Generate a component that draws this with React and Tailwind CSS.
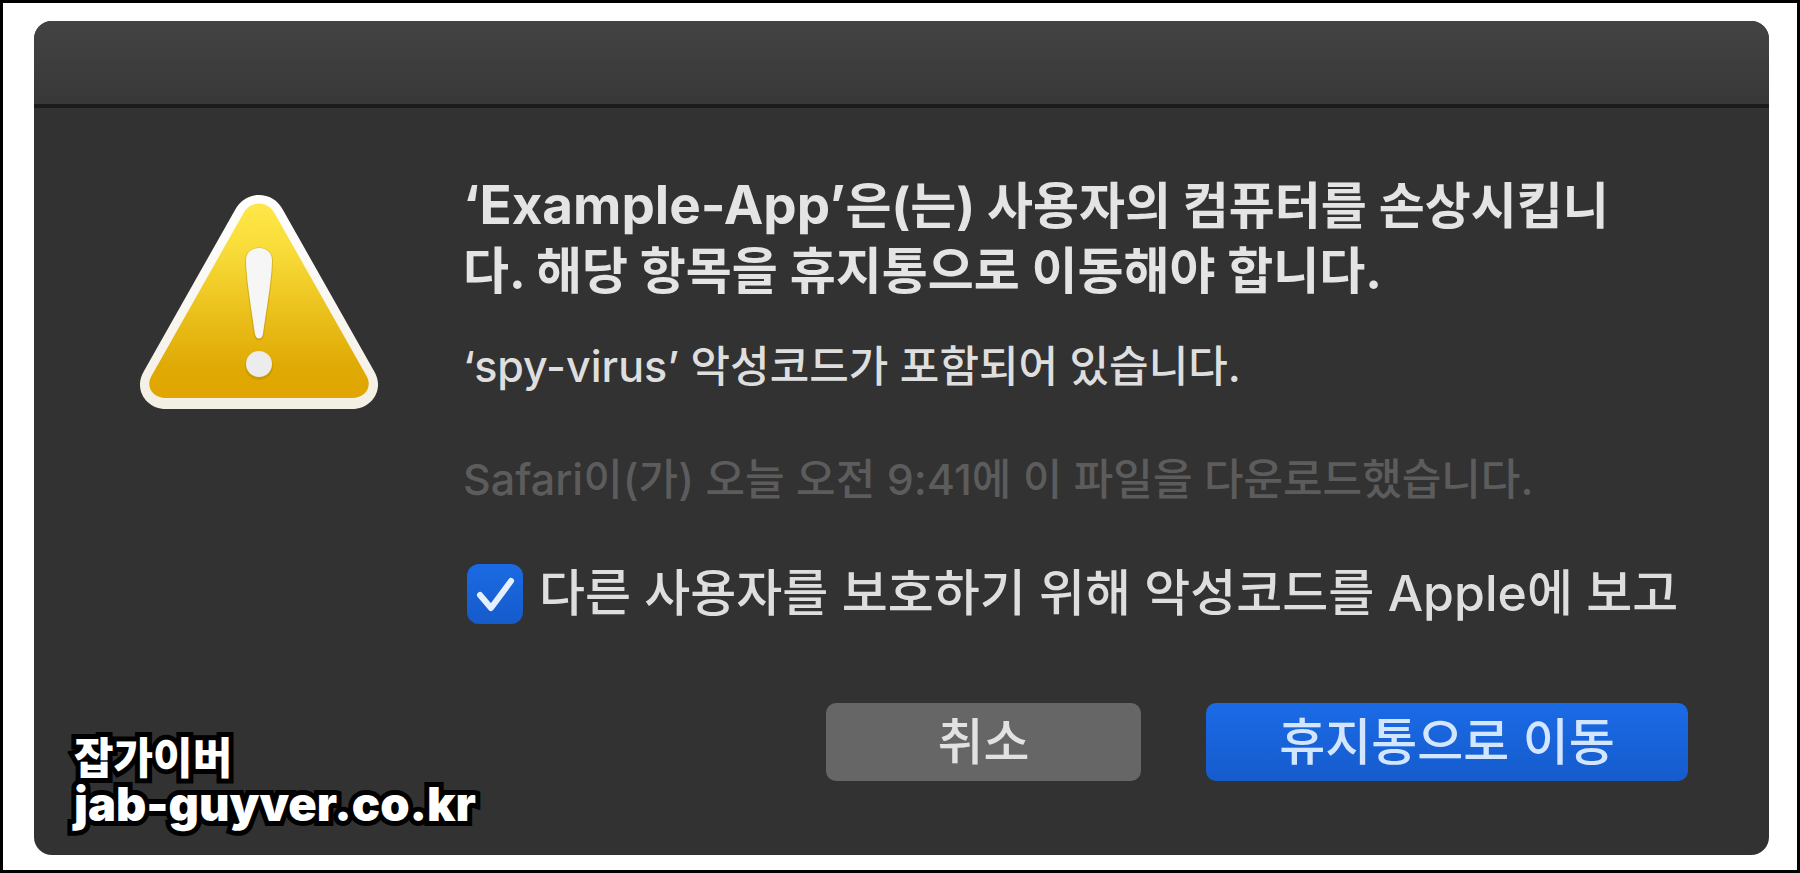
import { useState } from 'react';
import clsx from 'clsx';

function WarningIcon({ className }) {
  return (
    <svg viewBox="0 0 238 214" className={className} role="img" aria-label="경고">
      <defs>
        <linearGradient id="warning-fill" x1="0" y1="0" x2="0" y2="1">
          <stop offset="0" stopColor="#ffe748" />
          <stop offset="0.25" stopColor="#f8db38" />
          <stop offset="0.6" stopColor="#e9bd18" />
          <stop offset="0.85" stopColor="#e0a904" />
          <stop offset="1" stopColor="#e0a500" />
        </linearGradient>
        <linearGradient id="warning-edge" x1="0" y1="0" x2="0" y2="1">
          <stop offset="0" stopColor="#ffffff" />
          <stop offset="1" stopColor="#f4efe4" />
        </linearGradient>
      </defs>
      <path
        d="M95 15C105 -5 133 -5 143 15L234 176C245 194 232 214 212 214H26C6 214 -7 194 4 176Z"
        fill="url(#warning-edge)"
      />
      <path
        d="M103 19C110 5 128 5 135 19L226 180C233 191 226 203 212 203H26C12 203 5 191 12 180Z"
        fill="url(#warning-fill)"
      />
      <path
        d="M105 66C105 48 133 48 133 66C133 84 127 118 124 140C123 147 115 147 114 140C111 118 105 84 105 66Z"
        fill="#a87f00"
        opacity="0.35"
      />
      <path
        d="M106 65C106 49 132 49 132 65C132 83 126 117 123 139C122 145 116 145 115 139C112 117 106 83 106 65Z"
        fill="#f6f6f6"
      />
      <circle cx="119" cy="171" r="14" fill="#a87f00" opacity="0.35" />
      <circle cx="119" cy="169" r="13" fill="#ececec" />
    </svg>
  );
}

function Checkbox({ label, checked, onChange }) {
  return (
    <label className="flex items-center gap-4 text-[50px] leading-[65px] font-medium whitespace-nowrap text-[#dedede]">
      <span className="relative ml-1 block h-15 w-14 shrink-0">
        <input
          type="checkbox"
          checked={checked}
          onChange={onChange}
          className="block size-full appearance-none rounded-xl bg-[#666666] checked:bg-linear-to-b checked:from-[#1b6ae4] checked:to-[#155bcb]"
        />
        {checked && (
          <svg viewBox="0 0 56 60" className="pointer-events-none absolute inset-0 size-full" fill="none">
            <path
              d="M13 31L24 44L44 17"
              stroke="#e4f0ff"
              strokeWidth="6"
              strokeLinecap="round"
              strokeLinejoin="round"
            />
          </svg>
        )}
      </span>
      {label}
    </label>
  );
}

function Button({ variant = 'default', className, children }) {
  return (
    <button
      type="button"
      className={clsx(
        'h-[78px] rounded-[10px] text-[50px] leading-[65px] font-medium whitespace-nowrap',
        variant === 'primary'
          ? 'bg-linear-to-b from-[#1b6ae6] to-[#155ccd] text-[#d3e6ff]'
          : 'bg-[#666666] text-[#e2e2e2]',
        className
      )}
    >
      {children}
    </button>
  );
}

export default function App() {
  const [report, setReport] = useState(true);

  return (
    <main className="flex min-h-screen flex-col border-3 border-black bg-white pt-[18px] pr-7 pb-[15px] pl-[31px] font-['Inter','Noto_Sans_CJK_KR',sans-serif]">
      <section
        role="alertdialog"
        aria-labelledby="alert-title"
        className="relative flex flex-1 flex-col overflow-hidden rounded-[18px] bg-[#323232]"
      >
        <header className="h-[87px] border-b-4 border-[#1b1b1b] bg-linear-to-b from-[#434343] to-[#383838]" />

        <div className="flex items-start gap-[85px] pt-[65px] pr-[81px] pl-[106px]">
          <WarningIcon className="mt-[22px] h-[214px] w-[238px] shrink-0" />

          <div className="min-w-0 flex-1">
            <h1
              id="alert-title"
              className="pr-10 text-[50px] leading-[65px] font-bold break-all text-[#e4e4e4]"
            >
              <span className="text-[53px]">‘Example-App’</span>은(는) 사용자의 컴퓨터를 손상시킵니다. 해당 항목을 휴지통으로 이동해야 합니다.
            </h1>
            <p className="mt-[34px] text-[43px] leading-[57px] font-medium text-[#dedede]">
              ‘spy-virus’ 악성코드가 포함되어 있습니다.
            </p>
            <p className="mt-14 text-[43px] leading-[57px] font-medium text-[#5c5c5c]">
              Safari이(가) 오늘 오전 9:41에 이 파일을 다운로드했습니다.
            </p>
            <div className="mt-[53px]">
              <Checkbox
                label="다른 사용자를 보호하기 위해 악성코드를 Apple에 보고"
                checked={report}
                onChange={(e) => setReport(e.target.checked)}
              />
            </div>
            <div className="mt-[77px] flex justify-end gap-[65px]">
              <Button className="w-[315px]">취소</Button>
              <Button variant="primary" className="w-[482px]">
                휴지통으로 이동
              </Button>
            </div>
          </div>
        </div>

        <div className="absolute bottom-7 left-10 leading-[46px] font-black text-white [paint-order:stroke_fill] [-webkit-text-stroke:10px_#000]">
          <p className="text-[43px]">잡가이버</p>
          <p className="text-[47px]">jab-guyver.co.kr</p>
        </div>
      </section>
    </main>
  );
}
